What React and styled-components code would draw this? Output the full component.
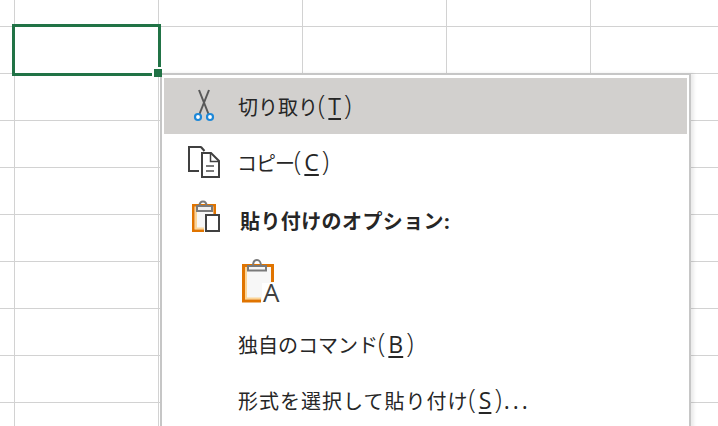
import React from "react";
import styled, { createGlobalStyle } from "styled-components";

const GlobalStyle = createGlobalStyle`
  html, body {
    margin: 0;
    padding: 0;
    background: #fff;
    overflow: hidden;
  }
`;

const Sheet = styled.div`
  position: relative;
  width: 718px;
  height: 426px;
  overflow: hidden;
  background: #fff;
  font-family: "Open Sans", "Noto Sans CJK JP", sans-serif;
`;

const CellGrid = styled.div`
  display: grid;
  grid-template-columns: 15px repeat(5, 144px);
  grid-template-rows: 27px repeat(9, 47px);
`;

const Cell = styled.div`
  box-sizing: border-box;
  border-right: 1px solid #d2d2d2;
  border-bottom: 1px solid #d2d2d2;
`;

const Selection = styled.div`
  position: absolute;
  left: 12px;
  top: 24px;
  width: 149px;
  height: 52px;
  box-sizing: border-box;
  border: 3px solid #217346;
`;

const Handle = styled.div`
  position: absolute;
  left: 152px;
  top: 67px;
  width: 8px;
  height: 8px;
  background: #217346;
  border: 2px solid #fff;
  border-right-width: 0;
  border-bottom-width: 0;
  z-index: 3;
`;

const Menu = styled.div`
  position: absolute;
  left: 160px;
  top: 73px;
  width: 531px;
  box-sizing: border-box;
  border: 2px solid #c6c6c6;
  padding: 3px 2px 0;
  background: #fff;
  box-shadow: 3px 0 3px rgba(0, 0, 0, 0.08);
  display: flex;
  flex-direction: column;
  z-index: 2;
`;

const Row = styled.div`
  display: flex;
  align-items: center;
  height: ${(p) => p.$height || 56}px;
  background: ${(p) => (p.$active ? "#d2d0ce" : "transparent")};
  color: #262626;
  font-size: 20px;
  font-weight: ${(p) => (p.$bold ? 700 : 400)};
  white-space: nowrap;
`;

const IconSlot = styled.div`
  width: 74px;
  flex: none;
  display: flex;
  padding-left: ${(p) => p.$inset || 0}px;
  box-sizing: border-box;
`;

const Label = styled.span`
  line-height: 1;
  letter-spacing: ${(p) => p.$track || 0}px;
  margin-left: ${(p) => p.$shift || 0}px;
`;

const Mnemonic = styled.span`
  font-size: 27px;
  font-weight: 300;
  letter-spacing: 0;
  line-height: 20px;
  u {
    font-size: 23px;
    font-weight: 400;
    margin: 0 3px;
    text-underline-offset: 3px;
    text-decoration-thickness: 1.5px;
  }
`;

const Dots = styled.span`
  font-size: 23px;
  font-weight: 400;
  letter-spacing: 3px;
  margin-left: 2px;
`;

const PasteTile = styled.div`
  position: relative;
  width: 40px;
  height: 54px;
  margin-left: 77px;
`;

const TileLetter = styled.span`
  position: absolute;
  left: 22px;
  top: 19px;
  color: #404040;
  font-family: "Open Sans", sans-serif;
  font-weight: 400;
  font-size: 26px;
  line-height: 30px;
`;

const ScissorsIcon = () => (
  <svg width="28" height="34" viewBox="0 0 28 34" fill="none">
    <path d="M9 1 L18.5 25" stroke="#595959" strokeWidth="2" />
    <path d="M19 1 L9.5 25" stroke="#595959" strokeWidth="2" />
    <circle cx="8" cy="28" r="3" stroke="#1e88d8" strokeWidth="2.2" fill="#fff" />
    <circle cx="20" cy="28" r="3" stroke="#1e88d8" strokeWidth="2.2" fill="#fff" />
  </svg>
);

const CopyIcon = () => (
  <svg width="36" height="34" viewBox="0 0 36 34" fill="none">
    <path d="M15.5 2 H3 V26 H13" stroke="#404040" strokeWidth="2" />
    <path d="M15 2 L18.5 6" stroke="#404040" strokeWidth="2" />
    <path d="M16 8 H25 L33 16 V32 H16 Z" fill="#fff" stroke="#404040" strokeWidth="2" />
    <path d="M24.5 8 V16.5 H33" fill="none" stroke="#404040" strokeWidth="1.5" />
    <path d="M20 21 H28 M20 26 H28" stroke="#7a7a7a" strokeWidth="2" />
  </svg>
);

const PasteSmallIcon = () => (
  <svg width="30" height="44" viewBox="0 0 30 44" fill="none">
    <rect x="3" y="5" width="21" height="26" fill="#f7f7f7" />
    <path d="M5 5 V28.5 H13" stroke="#fcd597" strokeWidth="2" />
    <path d="M13 30.7 H2.3 V5.2 H23.7 V15" stroke="#e07400" strokeWidth="2.6" />
    <path d="M8.5 6 C8.5 0 15.5 0 15.5 6" stroke="#7a7a7a" strokeWidth="2" />
    <rect x="6" y="6" width="15" height="5" fill="#efefef" stroke="#7a7a7a" strokeWidth="2" />
    <rect x="15" y="15" width="13" height="16" fill="#fff" stroke="#404040" strokeWidth="2" />
  </svg>
);

const PasteLargeIcon = () => (
  <svg width="40" height="54" viewBox="0 0 40 54" fill="none">
    <rect x="2" y="7" width="30" height="36" fill="#f7f7f7" />
    <path d="M5 8 V40.5 H20" stroke="#fcd597" strokeWidth="2" />
    <path d="M20 43 H2.5 V7.5 H31.5 V24" stroke="#e07400" strokeWidth="3" />
    <path d="M12 8 C12 0 20 0 20 8" stroke="#7a7a7a" strokeWidth="2" />
    <rect x="7" y="8" width="18" height="4.5" fill="#f7f7f7" stroke="#7a7a7a" strokeWidth="2" />
    <rect x="21" y="25" width="14" height="20" fill="#fff" />
  </svg>
);

const cellCount = 6 * 10;

export default function App() {
  return (
    <Sheet>
      <GlobalStyle />
      <CellGrid>
        {Array.from({ length: cellCount }, (_, i) => (
          <Cell key={i} />
        ))}
      </CellGrid>
      <Selection />
      <Handle />
      <Menu>
        <Row $active>
          <IconSlot $inset={26}>
            <ScissorsIcon />
          </IconSlot>
          <Label>
            切り取り
            <Mnemonic>
              (<u>T</u>)
            </Mnemonic>
          </Label>
        </Row>
        <Row>
          <IconSlot $inset={22}>
            <CopyIcon />
          </IconSlot>
          <Label $track={-1} $shift={-1}>
            コピー
            <Mnemonic>
              (<u>C</u>)
            </Mnemonic>
          </Label>
        </Row>
        <Row $height={64} $bold>
          <IconSlot $inset={27}>
            <PasteSmallIcon />
          </IconSlot>
          <Label $track={0.4} $shift={2}>
            貼り付けのオプション:
          </Label>
        </Row>
        <Row $height={62}>
          <PasteTile>
            <PasteLargeIcon />
            <TileLetter>A</TileLetter>
          </PasteTile>
        </Row>
        <Row>
          <IconSlot />
          <Label>
            独自のコマンド
            <Mnemonic>
              (<u>B</u>)
            </Mnemonic>
          </Label>
        </Row>
        <Row>
          <IconSlot />
          <Label $track={1}>
            形式を選択して貼り付け
            <Mnemonic>
              (<u>S</u>)<Dots>...</Dots>
            </Mnemonic>
          </Label>
        </Row>
      </Menu>
    </Sheet>
  );
}
